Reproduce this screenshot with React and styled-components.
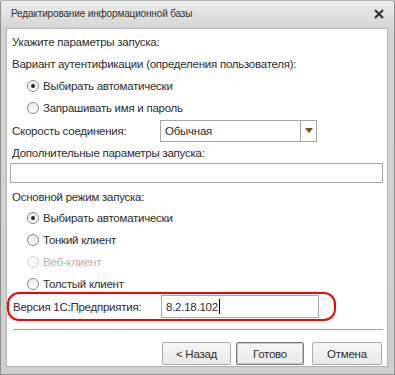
import React from 'react';
import styled, { createGlobalStyle } from 'styled-components';

const GlobalStyle = createGlobalStyle`
  html, body {
    margin: 0;
    padding: 0;
  }
  body {
    font-family: "Liberation Sans", Arial, sans-serif;
    background: #d6d6d6;
  }
`;

const Window = styled.div`
  width: 395px;
  height: 375px;
  box-sizing: border-box;
  display: flex;
  flex-direction: column;
  padding: 0 6px 7px 5px;
  background: linear-gradient(to bottom, #ececec 0px, #d4d4d4 28px, #cfcfcf 100%);
  border: 1px solid #8f8f8f;
  border-top-color: #b5b5b5;
  border-radius: 3px 3px 0 0;
`;

const TitleBar = styled.div`
  height: 27px;
  display: flex;
  align-items: center;
  justify-content: space-between;
  padding: 0 4px 2px 5px;
  box-sizing: border-box;
  font-size: 10px;
  letter-spacing: -0.15px;
  color: #333;
`;

const Close = styled.svg`
  width: 10px;
  height: 10px;
`;

const Panel = styled.div`
  flex: 1;
  background: #fff;
  border: 1px solid #b4b4b4;
  display: flex;
  flex-direction: column;
  padding: 2px 4px 0 0;
  font-size: 11.5px;
  letter-spacing: -0.25px;
  color: #2e2e2e;
`;

const Row = styled.div`
  height: ${p => p.h || 22}px;
  box-sizing: border-box;
  display: flex;
  align-items: center;
  padding-left: ${p => p.indent || 5}px;
  padding-top: ${p => p.top || 0}px;
  flex-shrink: 0;
`;

const RadioMark = styled.span`
  box-sizing: border-box;
  width: 12px;
  height: 12px;
  border-radius: 50%;
  border: 1px solid ${p => (p.disabled ? '#d4d4d4' : '#8a8a8a')};
  background: ${p => (p.disabled ? '#fafafa' : 'linear-gradient(#ececec, #ffffff)')};
  display: flex;
  align-items: center;
  justify-content: center;
  margin-right: 4px;

  &::after {
    content: '';
    width: 4px;
    height: 4px;
    border-radius: 50%;
    background: #222;
    display: ${p => (p.checked ? 'block' : 'none')};
  }
`;

const RadioLabel = styled.span`
  color: ${p => (p.disabled ? '#b4b4b4' : '#2e2e2e')};
`;

const Label = styled.span`
  width: ${p => p.w || 'auto'}px;
  flex-shrink: 0;
  white-space: nowrap;
`;

const Field = styled.div`
  box-sizing: border-box;
  width: ${p => p.w}px;
  height: ${p => p.h || 21}px;
  border: 1px solid #a7a7a7;
  background: #fff;
  display: flex;
  align-items: center;
  padding-left: 4px;
  color: #2e2e2e;
`;

const Caret = styled.span`
  width: 1px;
  height: 15px;
  background: #000;
  margin-left: 1px;
`;

const SelectText = styled.span`
  flex: 1;
`;

const DropButton = styled.div`
  width: 15px;
  height: 100%;
  border-left: 1px solid #a7a7a7;
  display: flex;
  align-items: center;
  justify-content: center;
`;

const Highlight = styled.div`
  box-sizing: border-box;
  width: 329px;
  height: 29px;
  border: 2px solid #f00;
  border-radius: 12px;
  display: flex;
  align-items: center;
  padding-left: 4px;
  margin-top: -3px;
`;

const Separator = styled.div`
  height: 1px;
  background: #a0a0a0;
  margin: 8px 0 0 6px;
`;

const Buttons = styled.div`
  display: flex;
  justify-content: flex-end;
  gap: 5px;
  padding: 12px 1px 0 0;
`;

const Button = styled.button`
  box-sizing: border-box;
  width: ${p => p.w || 70}px;
  height: 23px;
  font-family: inherit;
  font-size: 11.5px;
  letter-spacing: -0.25px;
  color: #2e2e2e;
  border: 1px solid ${p => (p.primary ? '#7a7a7a' : '#acacac')};
  box-shadow: ${p => (p.primary ? 'inset 0 0 0 1px #c9c9c9' : 'none')};
  border-radius: 2px;
  background: linear-gradient(#f7f7f7, #e9e9e9);
  padding: 0;
  margin-left: ${p => p.gap || 0}px;
`;

function Radio({ checked, disabled, children }) {
  return (
    <Row indent={20}>
      <RadioMark checked={checked} disabled={disabled} />
      <RadioLabel disabled={disabled}>{children}</RadioLabel>
    </Row>
  );
}

export default function App() {
  return (
    <>
      <GlobalStyle />
      <Window>
        <TitleBar>
          <span>Редактирование информационной базы</span>
          <Close viewBox="0 0 10 10">
            <path d="M1 1 L9 9 M9 1 L1 9" stroke="#333" strokeWidth="2.2" />
          </Close>
        </TitleBar>
        <Panel>
          <Row>Укажите параметры запуска:</Row>
          <Row>Вариант аутентификации (определения пользователя):</Row>
          <Radio checked>Выбирать автоматически</Radio>
          <Radio>Запрашивать имя и пароль</Radio>
          <Row h={23}>
            <Label w={148}>Скорость соединения:</Label>
            <Field w={157} h={22}>
              <SelectText>Обычная</SelectText>
              <DropButton>
                <svg width="8" height="5" viewBox="0 0 8 5">
                  <path d="M0 0 H8 L4 5 Z" fill="#6b5a12" />
                </svg>
              </DropButton>
            </Field>
          </Row>
          <Row h={21}>Дополнительные параметры запуска:</Row>
          <Row h={20} indent={3}>
            <Field w={375} h={20} />
          </Row>
          <Row h={24} top={3}>Основной режим запуска:</Row>
          <Radio checked>Выбирать автоматически</Radio>
          <Radio>Тонкий клиент</Radio>
          <Radio disabled>Веб-клиент</Radio>
          <Radio>Толстый клиент</Radio>
          <Highlight>
            <Label w={148}>Версия 1С:Предприятия:</Label>
            <Field w={158} h={23}>
              8.2.18.102
              <Caret />
            </Field>
          </Highlight>
          <Separator />
          <Buttons>
            <Button w={69}>&lt; Назад</Button>
            <Button w={68} primary>Готово</Button>
            <Button w={70} gap={3}>Отмена</Button>
          </Buttons>
        </Panel>
      </Window>
    </>
  );
}
